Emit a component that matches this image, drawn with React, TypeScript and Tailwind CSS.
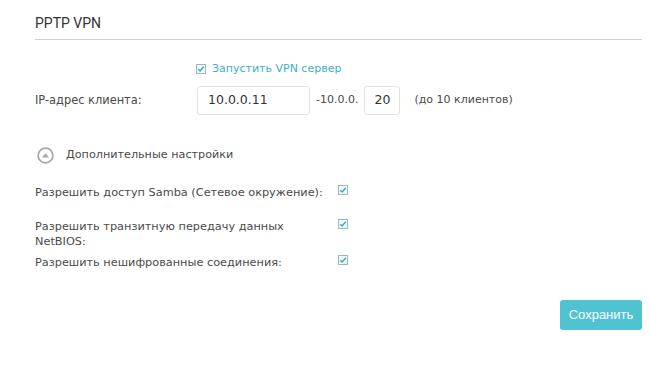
import { ReactNode } from 'react';

function Check() {
  return (
    <span className="inline-flex h-[10px] w-[10px] items-center justify-center border border-[#9ab8bf] bg-[#f4fafb]">
      <svg width="8" height="8" viewBox="0 0 8 8" fill="none">
        <path d="M1.2 4.2 3.1 6 6.8 1.8" stroke="#3aa7b9" strokeWidth="1.4" />
      </svg>
    </span>
  );
}

function OptionRow({ children, className }: { children: ReactNode; className?: string }) {
  return (
    <div className={`flex items-start ${className ?? ''}`}>
      <span className="w-[303px] text-[11.3px] leading-[15px]">{children}</span>
      <span className="mt-[-2px]">
        <Check />
      </span>
    </div>
  );
}

export default function App() {
  return (
    <div className="h-[367px] w-[650px] bg-white pl-[35px] pr-[8px] font-['DejaVu_Sans',sans-serif] text-[11px] text-[#4a4a4a]">
      <div className="border-b border-[#cfcfcf] pt-[16px] pb-[8px] font-['Roboto',sans-serif] text-[14px] leading-[15px] text-[#333]">
        PPTP VPN
      </div>

      <div className="mt-[22px] ml-[161px] flex items-center gap-[6px] text-[#3fb0c4]">
        <Check />
        <span className="leading-[14px]">Запустить VPN сервер</span>
      </div>

      <div className="mt-[10px] flex items-center">
        <span className="w-[162px] text-[11.4px]">IP-адрес клиента:</span>
        <div className="flex h-[29px] w-[113px] items-center rounded-[3px] border border-[#e3e3e3] pl-[10px] text-[12.5px] text-[#333]">
          10.0.0.11
        </div>
        <span className="ml-[6px]">-10.0.0.</span>
        <div className="ml-[6px] flex h-[29px] w-[36px] items-center rounded-[3px] border border-[#e3e3e3] pl-[9px] text-[12.5px] text-[#333]">
          20
        </div>
        <span className="ml-[14px]">(до 10 клиентов)</span>
      </div>

      <div className="mt-[32px] flex items-center">
        <svg width="17" height="17" viewBox="0 0 17 17" className="ml-[2px]">
          <circle cx="8.5" cy="8.5" r="7.4" fill="none" stroke="#a9a9a9" strokeWidth="1.8" />
          <path d="M4.8 10.4 8.5 6.2 12.2 10.4Z" fill="#a9a9a9" />
        </svg>
        <span className="ml-[12px] text-[11.2px]">Дополнительные настройки</span>
      </div>

      <div className="mt-[21px] flex flex-col">
        <OptionRow>Разрешить доступ Samba (Сетевое окружение):</OptionRow>
        <OptionRow className="mt-[19px]">
          Разрешить транзитную передачу данных
          <br />
          NetBIOS:
        </OptionRow>
        <OptionRow className="mt-[6px]">Разрешить нешифрованные соединения:</OptionRow>
      </div>

      <div className="mt-[30px] flex justify-end">
        <button className="h-[30px] w-[82px] rounded-[3px] bg-[#4fc3d1] font-['Liberation_Sans',sans-serif] text-[13px] text-white">
          Сохранить
        </button>
      </div>
    </div>
  );
}
